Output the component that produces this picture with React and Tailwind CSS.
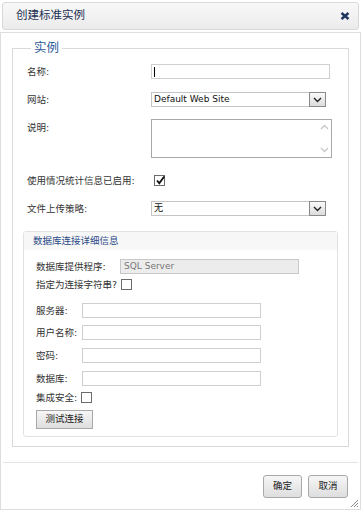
import React from "react"

const font = "font-['DejaVu_Sans','Noto_Sans_CJK_SC',sans-serif]"

const Chevron = ({ up }) => (
	<svg width="9" height="6" viewBox="0 0 9 6">
		<path
			d={up ? "M1 5 L4.5 1.5 L8 5" : "M1 1 L4.5 4.5 L8 1"}
			fill="none"
			stroke="currentColor"
			strokeWidth="1.4"
		/>
	</svg>
)

const Select = ({ value }) => (
	<div className="w-[175px] h-[15px] border border-[#c4c4c4] bg-white flex items-center">
		<span className="flex-1 pl-[2px] text-[9px] text-[#111] leading-none">{value}</span>
		<div className="w-[17px] h-[15px] -mr-px border border-[#8a8a8a] bg-gradient-to-b from-[#fafafa] to-[#dcdcdc] flex items-center justify-center text-[#222]">
			<Chevron />
		</div>
	</div>
)

const Checkbox = ({ checked }) => (
	<div className="w-[11px] h-[11px] border border-[#6b6b6b] bg-white relative">
		{checked && (
			<svg className="absolute -top-[1px] left-0" width="11" height="11" viewBox="0 0 11 11">
				<path d="M2 5.5 L4.3 8.2 L9.2 1.5" fill="none" stroke="#111" strokeWidth="1.8" />
			</svg>
		)}
	</div>
)

const Input = ({ className = "", children }) => (
	<div className={`h-[15px] border border-[#cfcfcf] bg-white ${className}`}>{children}</div>
)

const Button = ({ children, className = "" }) => (
	<button
		className={`border border-[#a9a9a9] bg-gradient-to-b from-[#f6f6f6] to-[#dedede] text-[9.5px] text-[#222] ${className}`}>
		{children}
	</button>
)

const Row = ({ label, children, className = "" }) => (
	<div className={`flex items-center pl-[4px] ${className}`}>
		<span className="w-[124px] text-[9.5px] text-[#333] leading-none">{label}</span>
		{children}
	</div>
)

const SubRow = ({ label, width, children, className = "" }) => (
	<div className={`flex items-center ${className}`}>
		<span className={`${width} text-[9.5px] text-[#333] leading-none`}>{label}</span>
		{children}
	</div>
)

export default function App() {
	return (
		<div className={`w-[361px] h-[510px] bg-white flex flex-col ${font}`}>
			{/* header */}
			<div className="mt-[2px] mx-[2px] h-[28px] rounded-[3px] border border-[#d8d8d8] bg-gradient-to-b from-[#f8f8f8] to-[#ebebeb] flex items-center justify-between pl-[13px] pr-[8px]">
				<span className="text-[11.5px] text-[#1c2f52]">创建标准实例</span>
				<svg width="10" height="8" viewBox="0 0 10 8">
					<path d="M1.5 1 L8.5 7 M8.5 1 L1.5 7" stroke="#1d3560" strokeWidth="2.4" />
				</svg>
			</div>

			{/* body */}
			<div className="mt-[2px] flex-1 border border-[#dedede] flex flex-col">
				<fieldset className="mt-[5px] ml-[11px] w-[337px] border border-[#d9d9d9] px-[10px] pb-[9px]">
					<legend className="ml-[8px] px-[3px] text-[12.5px] leading-[20px] text-[#2c5a98]">实例</legend>

					<Row label="名称:" className="mt-[6px]">
						<Input className="w-[179px] flex items-center">
							<div className="ml-[2px] w-px h-[10px] bg-black" />
						</Input>
					</Row>

					<Row label="网站:" className="mt-[13px]">
						<Select value="Default Web Site" />
					</Row>

					<div className="flex items-start pl-[4px] mt-[12px]">
						<span className="w-[124px] pt-[4px] text-[9.5px] text-[#333] leading-none">说明:</span>
						<div className="w-[181px] h-[39px] border border-[#a8a8a8] bg-white flex justify-end">
							<div className="w-[14px] flex flex-col items-center justify-between py-[4px] text-[#c8c8c8]">
								<Chevron up />
								<Chevron />
							</div>
						</div>
					</div>

					<Row label="使用情况统计信息已启用:" className="mt-[17px]">
						<div className="ml-[3px]">
							<Checkbox checked />
						</div>
					</Row>

					<Row label="文件上传策略:" className="mt-[15px]">
						<Select value="无" />
					</Row>

					{/* database section */}
					<div className="mt-[15px] border border-[#e2e2e2] rounded-[3px]">
						<div className="h-[18px] bg-[#f7f7f7] flex items-center pl-[9px] text-[9.5px] text-[#2a4a86]">
							数据库连接详细信息
						</div>
						<div className="pl-[12px] pb-[7px]">
							<SubRow label="数据库提供程序:" width="w-[84px]" className="mt-[9px]">
								<div className="w-[179px] h-[15px] border border-[#c8c8c8] bg-[#ececec] flex items-center pl-[3px] text-[9px] text-[#777] leading-none">
									SQL Server
								</div>
							</SubRow>
							<div className="mt-[5px] flex items-center">
								<span className="text-[9.5px] text-[#333] leading-none">指定为连接字符串?</span>
								<div className="ml-[4px]">
									<Checkbox />
								</div>
							</div>
							<SubRow label="服务器:" width="w-[46px]" className="mt-[13px]">
								<Input className="w-[179px]" />
							</SubRow>
							<SubRow label="用户名称:" width="w-[46px]" className="mt-[7px]">
								<Input className="w-[179px]" />
							</SubRow>
							<SubRow label="密码:" width="w-[46px]" className="mt-[8px]">
								<Input className="w-[179px]" />
							</SubRow>
							<SubRow label="数据库:" width="w-[46px]" className="mt-[8px]">
								<Input className="w-[179px]" />
							</SubRow>
							<div className="mt-[6px] flex items-center">
								<span className="text-[9.5px] text-[#333] leading-none">集成安全:</span>
								<div className="ml-[4px]">
									<Checkbox />
								</div>
							</div>
							<Button className="mt-[7px] w-[57px] h-[19px] block">测试连接</Button>
						</div>
					</div>
				</fieldset>

				<div className="mt-[15px] mx-[2px] border-t border-[#e4e4e4]" />

				{/* footer */}
				<div className="mt-[12px] flex justify-end gap-[6px] pr-[12px]">
					<Button className="w-[39px] h-[23px] rounded-[3px]">确定</Button>
					<Button className="w-[40px] h-[23px] rounded-[3px]">取消</Button>
				</div>
				<div className="flex-1 flex items-end justify-end pr-[1px] pb-[1px]">
					<svg width="9" height="9" viewBox="0 0 9 9">
						<path d="M8 1 L1 8 M8 4 L4 8 M8 7 L7 8" stroke="#8a8a8a" strokeWidth="1" />
					</svg>
				</div>
			</div>
		</div>
	)
}
